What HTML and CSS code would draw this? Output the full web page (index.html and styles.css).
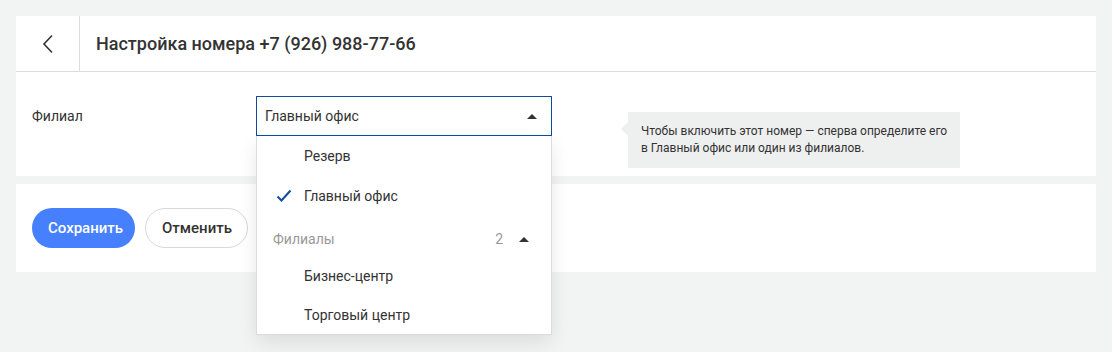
FILE: index.html
```html
<!DOCTYPE html>
<html lang="ru">
<head>
    <meta charset="UTF-8">
    <meta name="viewport" content="width=device-width, initial-scale=1.0">
    <title>Настройка номера</title>
    <link rel="stylesheet" href="styles.css">
</head>
<body>
    <div class="page">
        <div class="card header">
            <button class="back-button" aria-label="Назад">
                <svg width="12" height="20" viewBox="0 0 12 20"><path d="M10 1.5 L2 10 L10 18.5" fill="none" stroke="#333" stroke-width="1.6"/></svg>
            </button>
            <h1 class="title">Настройка номера +7 (926) 988-77-66</h1>
        </div>

        <div class="card form">
            <div class="field-label">Филиал</div>
            <div class="select">
                <div class="select-box">
                    <span>Главный офис</span>
                    <span class="arrow-up"></span>
                </div>
                <ul class="dropdown">
                    <li class="option">Резерв</li>
                    <li class="option selected">
                        <svg class="check" width="16" height="14" viewBox="0 0 16 14"><path d="M1.5 7.5 L5.5 11.5 L14.5 1.5" fill="none" stroke="#0d4e9c" stroke-width="2"/></svg>
                        Главный офис
                    </li>
                    <li class="group">
                        <span>Филиалы</span>
                        <span class="group-count">2</span>
                        <span class="arrow-up"></span>
                    </li>
                    <li class="option">Бизнес-центр</li>
                    <li class="option">Торговый центр</li>
                </ul>
            </div>
            <div class="hint">Чтобы включить этот номер — сперва определите его<br>в Главный офис или один из филиалов.</div>
        </div>

        <div class="card actions">
            <button class="btn btn-primary">Сохранить</button>
            <button class="btn btn-secondary">Отменить</button>
        </div>
    </div>
</body>
</html>
```

FILE: styles.css
```css
html, body {
    min-height: 100%;
}
body {
    margin: 0;
    min-height: 100vh;
    background-color: #f2f3f3;
    font-family: Roboto, "Noto Sans", Arial, sans-serif;
    color: #333;
}
.page {
    padding: 16px;
    min-height: 100vh;
    box-sizing: border-box;
    display: flex;
    flex-direction: column;
}
.card {
    background-color: #fff;
}
.header {
    display: flex;
    align-items: center;
    height: 55px;
    border-bottom: 1px solid #dcdcdc;
}
.back-button {
    width: 64px;
    height: 55px;
    border: none;
    border-right: 1px solid #dcdcdc;
    background: none;
    padding: 0;
    display: flex;
    align-items: center;
    justify-content: center;
    cursor: pointer;
}
.title {
    margin: 0 0 0 16px;
    font-size: 18px;
    font-weight: 500;
    color: #333;
}
.form {
    height: 104px;
    display: flex;
    align-items: flex-start;
    padding: 0 16px;
}
.field-label {
    width: 224px;
    margin-top: 36px;
    font-size: 14px;
}
.select {
    position: relative;
    width: 296px;
    margin-top: 24px;
}
.select-box {
    height: 38px;
    border: 1px solid #0d4e9c;
    display: flex;
    align-items: center;
    justify-content: space-between;
    padding: 0 14px 0 8px;
    font-size: 14px;
}
.arrow-up {
    width: 0;
    height: 0;
    border-left: 5px solid transparent;
    border-right: 5px solid transparent;
    border-bottom: 5px solid #333;
    border-radius: 2px 2px 0 0;
}
.dropdown {
    position: absolute;
    top: 40px;
    left: 0;
    width: 294px;
    margin: 0;
    padding: 0;
    list-style: none;
    background-color: #fff;
    border: 1px solid #dcdcdc;
    border-top: none;
    box-shadow: 0 8px 18px rgba(0, 0, 0, 0.09);
    z-index: 2;
}
.option, .group {
    height: 40px;
    display: flex;
    align-items: center;
    font-size: 14px;
}
.option {
    padding-left: 47px;
    position: relative;
}
.check {
    position: absolute;
    left: 19px;
    top: 13px;
}
.group {
    box-sizing: border-box;
    padding: 6px 22px 0 16px;
    color: #999;
}
.group-count {
    margin-left: auto;
    margin-right: 16px;
}
.group .arrow-up {
    border-bottom-color: #333;
}
.option:last-child {
    height: 38px;
}
.hint {
    position: relative;
    margin-left: 76px;
    margin-top: 40px;
    background-color: #eeefef;
    padding: 11px 12px 11px 13px;
    width: 307px;
    white-space: nowrap;
    font-size: 12px;
    line-height: 17px;
    color: #333;
}
.hint::before {
    content: "";
    position: absolute;
    left: -7px;
    top: 10px;
    border-top: 7px solid transparent;
    border-bottom: 7px solid transparent;
    border-right: 7px solid #eeefef;
}
.actions {
    margin-top: 8px;
    height: 88px;
    display: flex;
    align-items: center;
    gap: 10px;
    padding: 0 16px;
}
.btn {
    height: 40px;
    border-radius: 20px;
    padding: 0 16px;
    font-family: Roboto, "Noto Sans", Arial, sans-serif;
    font-size: 15px;
    font-weight: 500;
    cursor: pointer;
}
.btn-primary {
    background-color: #4680fe;
    border: none;
    color: #fff;
    width: 103px;
}
.btn-secondary {
    background-color: #fff;
    border: 1px solid #d8d8d8;
    color: #333;
    width: 103px;
}
```
